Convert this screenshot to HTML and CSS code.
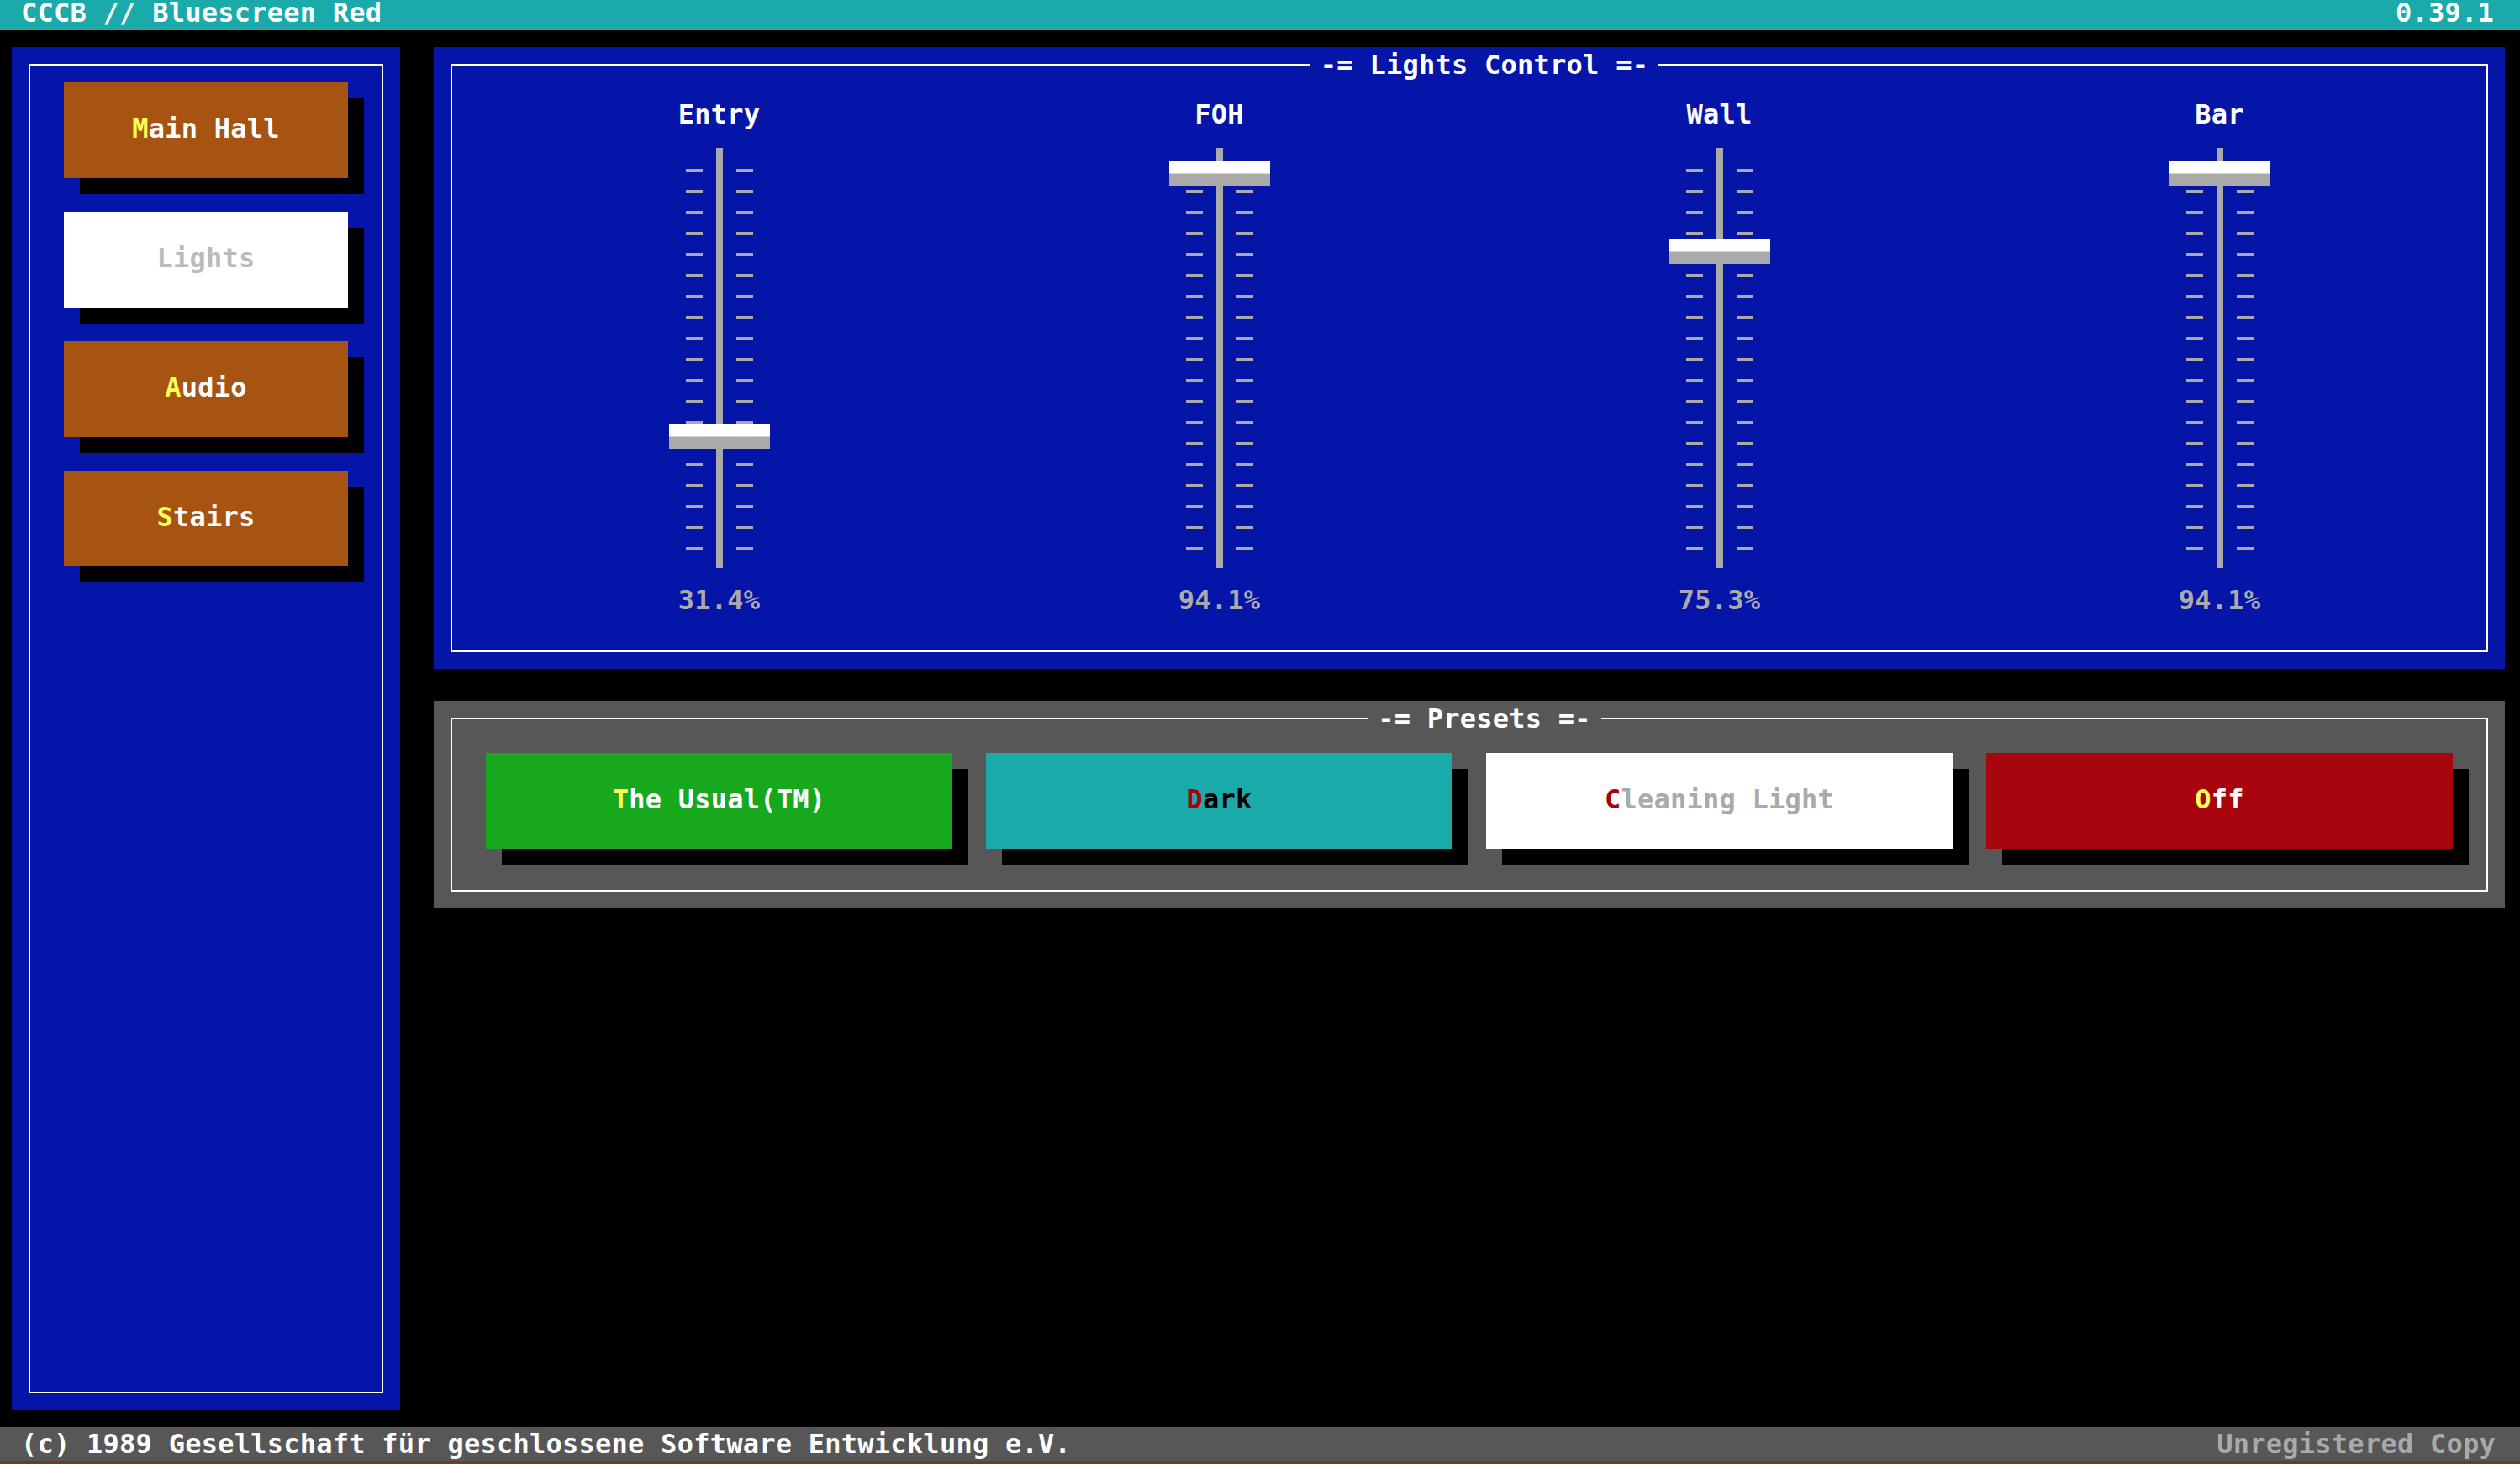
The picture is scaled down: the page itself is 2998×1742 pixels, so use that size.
FILE: index.html
```html
<!DOCTYPE html>
<html lang="de">
<head>
<meta charset="utf-8">
<title>CCCB // Bluescreen Red</title>
<link rel="stylesheet" href="styles.css">
</head>
<body>
<div class="app">
  <header class="topbar">
    <span class="app-title">CCCB // Bluescreen Red</span>
    <span class="app-version">0.39.1</span>
  </header>

  <main class="main">
    <nav class="sidebar">
      <div class="frame nav-frame">
        <button class="btn btn-brown"><span class="hk-yellow">M</span>ain Hall</button>
        <button class="btn btn-white btn-active">Lights</button>
        <button class="btn btn-brown"><span class="hk-yellow">A</span>udio</button>
        <button class="btn btn-brown"><span class="hk-yellow">S</span>tairs</button>
      </div>
    </nav>

    <section class="content">
      <div class="panel panel-blue">
        <div class="frame lights-frame">
          <div class="legend legend-blue">-= Lights Control =-</div>
          <div class="faders">
            <div class="fader">
              <div class="fader-label">Entry</div>
              <div class="fader-track"><div class="knob" style="top:328px"></div></div>
              <div class="fader-value">31.4%</div>
            </div>
            <div class="fader">
              <div class="fader-label">FOH</div>
              <div class="fader-track"><div class="knob" style="top:15px"></div></div>
              <div class="fader-value">94.1%</div>
            </div>
            <div class="fader">
              <div class="fader-label">Wall</div>
              <div class="fader-track"><div class="knob" style="top:108px"></div></div>
              <div class="fader-value">75.3%</div>
            </div>
            <div class="fader">
              <div class="fader-label">Bar</div>
              <div class="fader-track"><div class="knob" style="top:15px"></div></div>
              <div class="fader-value">94.1%</div>
            </div>
          </div>
        </div>
      </div>

      <div class="panel panel-grey">
        <div class="frame presets-frame">
          <div class="legend legend-grey">-= Presets =-</div>
          <div class="presets">
            <button class="btn btn-green"><span class="hk-yellow">T</span>he Usual(TM)</button>
            <button class="btn btn-teal"><span class="hk-red">D</span>ark</button>
            <button class="btn btn-white btn-cleaning"><span class="hk-red">C</span>leaning Light</button>
            <button class="btn btn-red"><span class="hk-yellow">O</span>ff</button>
          </div>
        </div>
      </div>
    </section>
  </main>

  <footer class="footer">
    <span>(c) 1989 Gesellschaft für geschlossene Software Entwicklung e.V.</span>
    <span class="unregistered">Unregistered Copy</span>
  </footer>
</div>
</body>
</html>
```

FILE: styles.css
```css
* { box-sizing: border-box; }

html, body {
  margin: 0;
  padding: 0;
  background: #000;
}

body {
  font-family: "DejaVu Sans Mono", "Liberation Mono", monospace;
  font-weight: bold;
  font-size: 32px;
  letter-spacing: 0.25px;
  line-height: 32px;
  color: #fff;
}

.app {
  width: 2998px;
  height: 1742px;
  display: flex;
  flex-direction: column;
  background: #000;
}

/* ---------- top bar ---------- */
.topbar {
  height: 36px;
  flex: none;
  background: #1aaaaa;
  display: flex;
  justify-content: space-between;
  align-items: flex-start;
  padding: 0 31px 0 25px;
  line-height: 30px;
  color: #fff;
}

/* ---------- main area ---------- */
.main {
  flex: 1;
  display: flex;
  gap: 40px;
  padding: 20px 18px 20px 14px;
  min-height: 0;
}

.frame {
  border: 2px solid #fff;
  position: relative;
}

.sidebar {
  width: 462px;
  flex: none;
  background: #0415a8;
  padding: 20px;
  display: flex;
}

.nav-frame {
  flex: 1;
  display: flex;
  flex-direction: column;
  gap: 40px;
  padding: 20px 40px;
}

/* ---------- buttons ---------- */
.btn {
  font: inherit;
  letter-spacing: inherit;
  border: 0;
  margin: 0;
  height: 114px;
  padding: 39px 0 0;
  display: flex;
  justify-content: center;
  align-items: flex-start;
  line-height: 32px;
  box-shadow: 19px 19px 0 #000;
  color: #fff;
  cursor: pointer;
  white-space: pre;
}

.btn-brown { background: #a75413; }
.btn-white { background: #fff; color: #aaa; }
.btn-active { color: #bbb; }
.btn-green { background: #18a81e; }
.btn-teal { background: #1aaaaa; color: #000; }
.btn-red { background: #a8050f; }

.hk-yellow { color: #ffff55; }
.hk-red { color: #a8000c; }

/* ---------- content ---------- */
.content {
  flex: 1;
  display: flex;
  flex-direction: column;
  gap: 38px;
}

.panel {
  padding: 20px;
}

.panel-blue {
  background: #0415a8;
  height: 740px;
  display: flex;
}

.panel-grey {
  background: #575757;
}

.lights-frame {
  flex: 1;
}

.legend {
  position: absolute;
  top: -17px;
  left: 50%;
  transform: translateX(calc(-50% + 18px));
  padding: 0 12px;
  white-space: pre;
  line-height: 32px;
  color: #fff;
}

.legend-blue { background: #0415a8; }
.legend-grey { background: #575757; }

/* ---------- faders ---------- */
.faders {
  display: grid;
  grid-template-columns: repeat(4, 1fr);
  padding: 0 20px;
}

.fader {
  display: flex;
  flex-direction: column;
  align-items: center;
}

.fader-label {
  margin-top: 42px;
  line-height: 32px;
  color: #fff;
}

.fader-track {
  margin-top: 24px;
  width: 80px;
  height: 500px;
  position: relative;
  background:
    linear-gradient(to right, transparent 36px, #aaa 36px, #aaa 44px, transparent 44px) 0 0 / 80px 500px no-repeat,
    repeating-linear-gradient(to bottom, #aaa 0, #aaa 4px, transparent 4px, transparent 25px) 0 25px / 20px 454px no-repeat,
    repeating-linear-gradient(to bottom, #aaa 0, #aaa 4px, transparent 4px, transparent 25px) 60px 25px / 20px 454px no-repeat;
}

.knob {
  position: absolute;
  left: -20px;
  width: 120px;
  height: 30px;
  background: linear-gradient(to bottom, #fff 0, #fff 15px, #aaa 16px, #aaa 30px);
}

.fader-value {
  margin-top: 22px;
  line-height: 32px;
  color: #aaa;
}

/* ---------- presets ---------- */
.presets {
  display: grid;
  grid-template-columns: repeat(4, 1fr);
  gap: 40px;
  padding: 40px 40px 49px;
}

.btn-cleaning { color: #aaa; }

/* ---------- footer ---------- */
.footer {
  flex: none;
  height: 44px;
  background: #575757;
  border-bottom: 3px solid #6e3f17;
  display: flex;
  justify-content: space-between;
  align-items: flex-start;
  padding: 4px 29px 0 25px;
  line-height: 32px;
  color: #fff;
}

.unregistered { color: #aaa; }
```
